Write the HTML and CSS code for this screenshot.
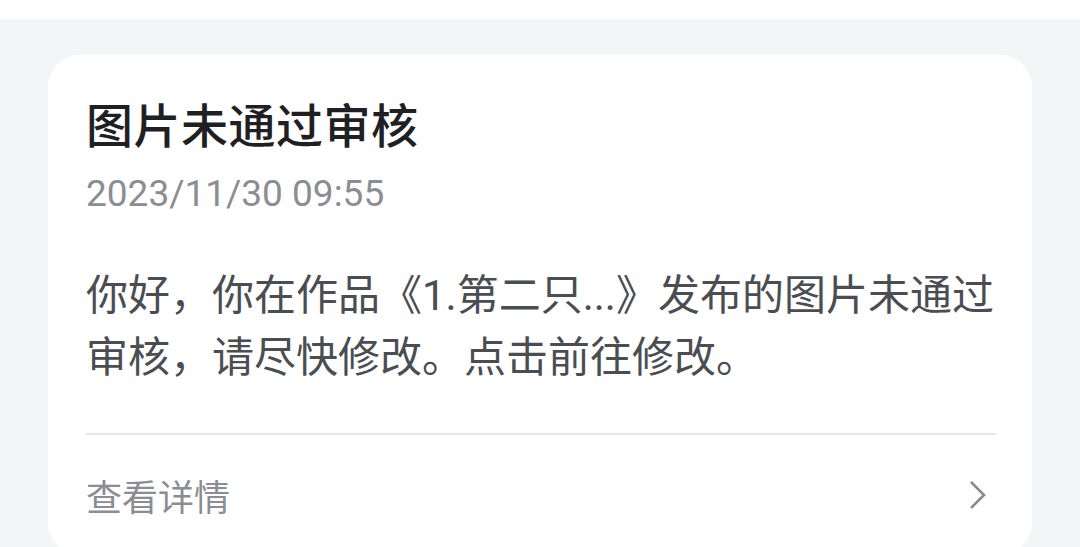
FILE: index.html
```html
<!DOCTYPE html>
<html lang="zh-CN">

<head>
    <meta charset="UTF-8">
    <meta name="viewport" content="width=device-width, initial-scale=1.0">
    <title>消息通知</title>
    <link rel="stylesheet" href="styles.css">
</head>

<body>

    <div class="top-bar"></div>

    <div class="message-list">
        <div class="message-card">
            <h2 class="message-title">图片未通过审核</h2>
            <div class="message-time">2023/11/30 09:55</div>
            <p class="message-body">你好，你在作品《1.第二只...》发布的图片未通过审核，请尽快修改。点击前往修改。</p>

            <div class="message-footer">
                <span>查看详情</span>
                <svg class="chevron" width="20" height="32" viewBox="0 0 20 32">
                    <polyline points="3,3 16,16 3,29" fill="none" stroke="#8a8b8f" stroke-width="2.6" />
                </svg>
            </div>
        </div>
    </div>

</body>

</html>
```

FILE: styles.css
```css
body {
    font-family: Roboto, "Noto Sans CJK SC", sans-serif;
    background-color: #f4f5f7;
    margin: 0;
}

.top-bar {
    height: 19px;
    background-color: #fff;
}

.message-list {
    padding: 36px 48px 0 48px;
}

.message-card {
    background-color: #fff;
    border-radius: 32px;
    padding: 40px 36px 0 38px;
}

.message-title {
    margin: 0;
    font-size: 47px;
    font-weight: 500;
    line-height: 64px;
    color: #1f2023;
    letter-spacing: 0.5px;
}

.message-time {
    margin-top: 11px;
    font-size: 37px;
    line-height: 48px;
    color: #8a8d92;
}

.message-body {
    margin: 47px 0 0 0;
    font-size: 42px;
    line-height: 62px;
    color: #4a4d52;
}

.message-footer {
    margin-top: 44px;
    border-top: 2px solid #e6e6e8;
    height: 120px;
    display: flex;
    align-items: center;
    justify-content: space-between;
    font-size: 36px;
    color: #8a8d92;
}

.chevron {
    margin-right: 8px;
}
```
